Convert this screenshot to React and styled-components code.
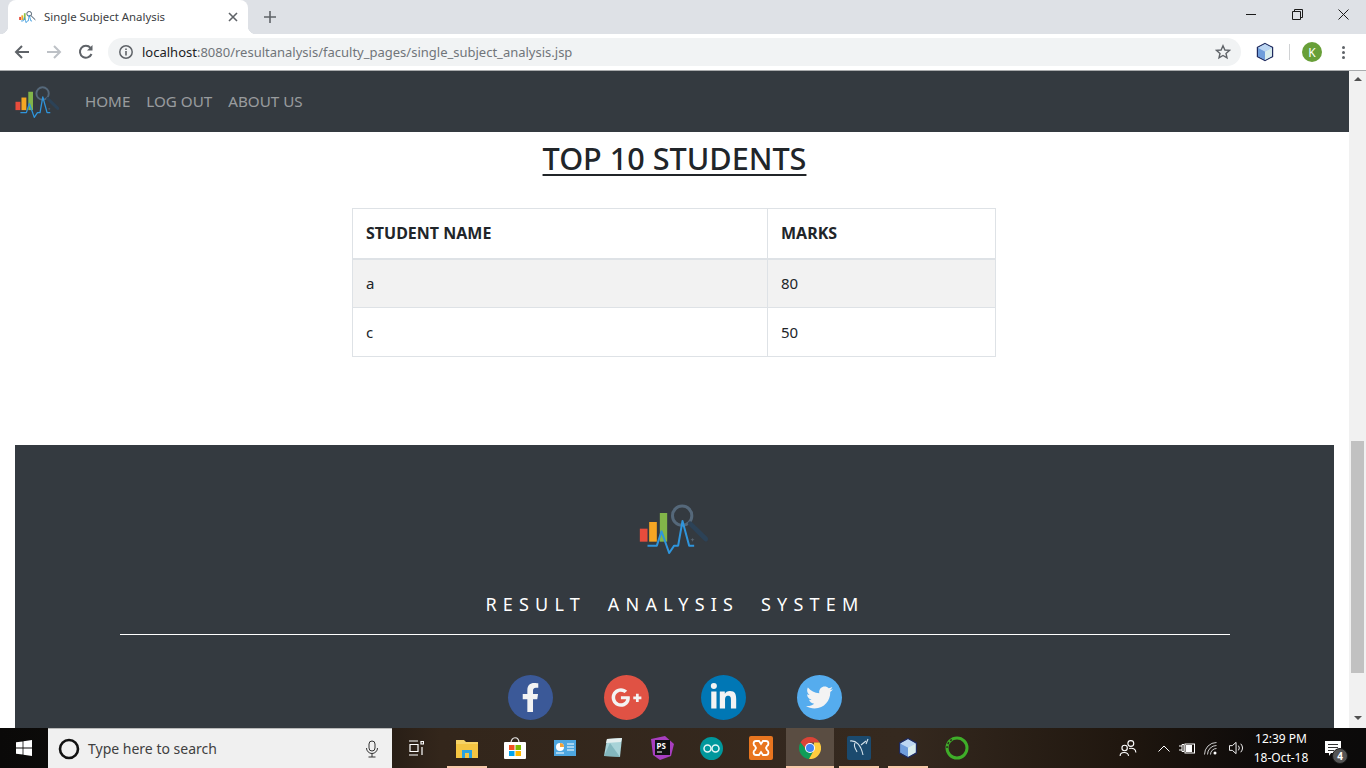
import React from "react";
import styled, { createGlobalStyle } from "styled-components";
import { FaFacebookF, FaGooglePlusG, FaLinkedinIn, FaTwitter } from "react-icons/fa";

const Global = createGlobalStyle`
  html, body { margin: 0; padding: 0; height: 100%; overflow: hidden; background: #fff; }
  * { box-sizing: border-box; }
  body { font-family: "Noto Sans", "Open Sans", sans-serif; color: #212529; }
`;

const Shell = styled.div`display: flex; flex-direction: column; height: 768px; width: 1366px; overflow: hidden;`;

/* ---------- browser chrome ---------- */
const TabStrip = styled.div`display: flex; align-items: stretch; height: 34px; background: #dee1e6; padding-left: 8px; flex: none;`;
const Tab = styled.div`
  position: relative; display: flex; align-items: center; width: 240px; background: #fff;
  border-radius: 8px 8px 0 0; padding: 0 10px 0 11px; color: #3c4043;
  &::before, &::after { content: ""; position: absolute; bottom: 0; width: 8px; height: 8px; }
  &::before { left: -8px; background: radial-gradient(circle at 0 0, #dee1e6 8px, #fff 8.5px); }
  &::after { right: -8px; background: radial-gradient(circle at 100% 0, #dee1e6 8px, #fff 8.5px); }
`;
const TabTitle = styled.span`font-size: 11.4px; margin-left: 8px; padding-bottom: 2px; flex: 1; white-space: nowrap;`;
const NewTab = styled.div`display: flex; align-items: center; margin-left: 15px; width: 16px;`;
const WindowControls = styled.div`display: flex; margin-left: auto; align-items: flex-start;`;
const WinBtn = styled.div`width: 46px; height: 28px; display: flex; align-items: center; justify-content: center;`;

const Toolbar = styled.div`
  display: flex; align-items: center; height: 37px; background: #fff; flex: none;
  border-bottom: 1px solid #a9abad; padding: 0 0 0 12px;
`;
const NavBtn = styled.div`width: 32px; height: 20px; display: flex; align-items: center; justify-content: flex-start; padding-left: 2px;`;
const Omnibox = styled.div`
  display: flex; align-items: center; width: 1133px; height: 28px; border-radius: 14px;
  background: #f1f3f4; padding: 0 10px;
`;
const Url = styled.div`font-size: 13px; margin-left: 8px; flex: 1; color: #70757a; white-space: nowrap;`;
const UrlHost = styled.span`color: #202124;`;
const ToolIcons = styled.div`display: flex; align-items: center; flex: 1; padding-left: 14px;`;
const Separator = styled.div`width: 1px; height: 16px; background: #d0d2d4; margin: 0 12px 0 14px;`;
const Avatar = styled.div`
  width: 20px; height: 20px; border-radius: 50%; background: #689f38; color: #fff; font-size: 12px;
  display: flex; align-items: center; justify-content: center;
`;
const MenuDots = styled.div`display: flex; flex-direction: column; gap: 2px; margin-left: 20px;`;
const Dot = styled.span`width: 3px; height: 3px; border-radius: 50%; background: #5f6368;`;

/* ---------- page ---------- */
const Viewport = styled.div`display: flex; flex: 1; min-height: 0;`;
const Page = styled.div`flex: 1; min-width: 0; overflow: hidden; background: #fff;`;
const Navbar = styled.nav`display: flex; align-items: center; height: 61px; background: #343a40; padding: 0 16px 0 15px;`;
const NavLinks = styled.div`display: flex; gap: 16px; margin-left: 24px; padding-bottom: 2px;`;
const NavLink = styled.a`font-size: 15.2px; color: rgba(255,255,255,.5); text-transform: uppercase;`;
const Heading = styled.h2`
  margin: 4px 0 0; text-align: center; font-size: 30.6px; line-height: 44px; font-weight: 500; text-decoration: underline;
  text-decoration-thickness: 2px; text-underline-offset: 4px; color: #212529;
`;
const Table = styled.table`
  width: 644px; margin: 28px 0 0 352px; border-collapse: collapse; font-size: 15px; color: #212529;
`;
const Th = styled.th`
  border: 1px solid #dee2e6; border-bottom-width: 2px; padding: 0 13px; height: 50px; text-align: left; font-weight: 700; font-size: 16px;
  width: ${p => p.$w};
`;
const Td = styled.td`border: 1px solid #dee2e6; padding: 0 13px; height: 49px;`;
const Row = styled.tr`background: ${p => (p.$striped ? "#f2f2f2" : "#fff")};`;
const Footer = styled.footer`
  margin: 88px 15px 0; background: #343a40; padding: 59px 104px 0 105px; display: flex; flex-direction: column; align-items: center; height: 300px;
`;
const FooterTitle = styled.div`
  margin-top: 38px; font-size: 18px; line-height: 24px; letter-spacing: 6.22px; color: #fff; white-space: pre; text-align: center;
`;
const FooterRule = styled.hr`width: 100%; margin: 18px 0 0; border: 0; border-top: 1px solid #fff;`;
const Socials = styled.div`display: flex; gap: 51.5px; margin-top: 40px;`;
const Social = styled.a`
  width: 45px; height: 45px; border-radius: 50%; background: ${p => p.$bg}; color: #f3f3f3;
  display: flex; align-items: center; justify-content: center; font-size: ${p => p.$size}px;
`;

const Scrollbar = styled.div`width: 17px; flex: none; background: #f1f1f1; display: flex; flex-direction: column; align-items: center; height: 100%;`;
const ScrollArrow = styled.div`
  width: 0; height: 0; border-left: 4px solid transparent; border-right: 4px solid transparent; flex: none;
  ${p => (p.$down ? "border-top: 4px solid #505050; margin-top: 43px;" : "border-bottom: 4px solid #505050; margin-top: 6px;")}
`;
const ScrollThumb = styled.div`width: 13px; height: 232px; background: #c1c1c1; margin-top: 360px; flex: none;`;

/* ---------- taskbar ---------- */
const Taskbar = styled.div`
  display: flex; align-items: stretch; height: 40px; flex: none; color: #fff;
  background: linear-gradient(90deg, #0a0908 0, #14100d 300px, #33261b 440px, #35291f 900px, #20170f 1120px, #0e0b0a 1260px, #0b0a0a 100%);
`;
const Start = styled.div`width: 48px; display: flex; align-items: center; justify-content: center;`;
const Search = styled.div`
  width: 344px; display: flex; align-items: center; background: #f0f0f0; padding: 0 12px 0 10px; color: #3a3a3a;
  border-top: 1px solid #b8b8b8;
`;
const SearchText = styled.span`flex: 1; margin-left: 8px; font-size: 14px; color: #404040;`;
const AppCell = styled.div`
  position: relative; width: 48px; margin-left: ${p => p.$ml || 0}px; display: flex; align-items: center; justify-content: center;
  background: ${p => (p.$active ? "#5a4d42" : "transparent")};
  &::after {
    content: ""; position: absolute; bottom: 0; height: 2px; background: #f8c9a9;
    display: ${p => (p.$running ? "block" : "none")}; left: ${p => (p.$active ? 0 : 4)}px; right: ${p => (p.$active ? 0 : 4)}px;
  }
`;
const Tray = styled.div`display: flex; align-items: center; margin-left: auto;`;
const TrayIcon = styled.div`display: flex; width: ${p => p.$w}px; margin-left: ${p => p.$ml || 0}px; justify-content: center; align-items: center;`;
const Clock = styled.div`width: 66px; margin-left: 3px; text-align: center; font-size: 12px; line-height: 19px; color: #fff; white-space: nowrap;`;
const Notify = styled.div`position: relative; width: 46px; margin-left: 6px; display: flex; justify-content: center; padding-right: 20px;`;
const Badge = styled.span`
  position: absolute; left: 12px; top: 7px; width: 16px; height: 16px; border-radius: 50%; background: #555;
  border: 1px solid #1a1a1a; font-size: 10px; font-weight: 700; color: #fff; display: flex; align-items: center; justify-content: center; line-height: 1;
`;

/* ---------- drawings ---------- */
const Logo = ({ w, h }) => (
  <svg width={w} height={h} viewBox="55 25 215 150" style={{ flex: "none" }}>
    <rect x="57" y="99" width="23" height="39" fill="#e74c3c" />
    <rect x="85" y="79" width="23" height="59" fill="#f5a623" />
    <rect x="117" y="52" width="22" height="86" fill="#8bc34a" opacity=".9" />
    <circle cx="184" cy="60" r="29" fill="none" stroke="#55687a" strokeWidth="9" />
    <path d="M208 84 L255 130" stroke="#2c4257" strokeWidth="14" strokeLinecap="round" />
    <path d="M80 150 H108 L122 107 L145 172 L160 150 H172 L185 76 L205 150 H220" fill="none" stroke="#2f95dc" strokeWidth="6" strokeLinejoin="round" />
    <path d="M210 132 H220 M215 128 V137" stroke="#5a6672" strokeWidth="2.5" />
  </svg>
);

const Cube = ({ s = 20 }) => (
  <svg width={s} height={s} viewBox="0 0 20 20">
    <path d="M10 1.5 L17.5 5.5 V14.5 L10 18.5 L2.5 14.5 V5.5 Z" fill="#a7c6ea" stroke="#1e2a5e" strokeWidth="1.4" />
    <path d="M3 5.8 L10 9.5 V18 L3 14.2 Z" fill="#6f9ddb" />
    <path d="M10 9.5 L17 5.8 V14.2 L10 18 Z" fill="#d9ecec" />
    <path d="M3 5.8 L10 2 L17 5.8 L10 9.5 Z" fill="#bcd6f2" />
  </svg>
);

const I = { stroke: "currentColor", fill: "none" };

export default function App() {
  return (
    <Shell>
      <Global />
      <TabStrip>
        <Tab>
          <svg width="17" height="12" viewBox="55 25 215 150"><rect x="57" y="99" width="23" height="39" fill="#e74c3c" /><rect x="85" y="79" width="23" height="59" fill="#f5a623" /><rect x="117" y="52" width="22" height="86" fill="#8bc34a" /><circle cx="184" cy="60" r="30" fill="none" stroke="#4a5b6c" strokeWidth="12" /><path d="M208 84 L262 136" stroke="#2c4257" strokeWidth="12" /><path d="M80 150 H108 L122 107 L145 172 L160 150 H172 L185 76 L205 150 H220" fill="none" stroke="#2f95dc" strokeWidth="10" /></svg>
          <TabTitle>Single Subject Analysis</TabTitle>
          <svg width="10" height="10" viewBox="0 0 10 10"><path d="M1 1 L9 9 M9 1 L1 9" stroke="#5f6368" strokeWidth="1.6" /></svg>
        </Tab>
        <NewTab>
          <svg width="14" height="14" viewBox="0 0 14 14"><path d="M7 1 V13 M1 7 H13" stroke="#5f6368" strokeWidth="1.6" /></svg>
        </NewTab>
        <WindowControls>
          <WinBtn><svg width="10" height="10" viewBox="0 0 10 10"><path d="M0 5.5 H10" stroke="#1a1a1a" /></svg></WinBtn>
          <WinBtn><svg width="11" height="11" viewBox="0 0 11 11"><path d="M.5 2.5 H8.5 V10.5 H.5 Z M2.5 2.5 V.5 H10.5 V8.5 H8.5" fill="none" stroke="#1a1a1a" /></svg></WinBtn>
          <WinBtn><svg width="11" height="11" viewBox="0 0 11 11"><path d="M.5 .5 L10.5 10.5 M10.5 .5 L.5 10.5" stroke="#1a1a1a" /></svg></WinBtn>
        </WindowControls>
      </TabStrip>
      <Toolbar>
        <NavBtn><svg width="16" height="16" viewBox="0 0 16 16"><path d="M15 8 H2 M8 2 L2 8 L8 14" {...I} stroke="#5f6368" strokeWidth="2" /></svg></NavBtn>
        <NavBtn><svg width="16" height="16" viewBox="0 0 16 16"><path d="M1 8 H14 M8 2 L14 8 L8 14" {...I} stroke="#bdc1c6" strokeWidth="2" /></svg></NavBtn>
        <NavBtn><svg width="16" height="16" viewBox="0 0 16 16"><path d="M13.5 10 A6 6 0 1 1 12.5 3.8" {...I} stroke="#5f6368" strokeWidth="2" /><path d="M14.5 1 V6.5 H9 Z" fill="#5f6368" /></svg></NavBtn>
        <Omnibox>
          <svg width="16" height="16" viewBox="0 0 16 16"><circle cx="8" cy="8" r="6.2" {...I} stroke="#5f6368" strokeWidth="1.5" /><path d="M8 7 V11.5 M8 4.5 V6" stroke="#5f6368" strokeWidth="1.6" /></svg>
          <Url><UrlHost>localhost</UrlHost>:8080/resultanalysis/faculty_pages/single_subject_analysis.jsp</Url>
          <svg width="16" height="16" viewBox="0 0 16 16"><path d="M8 1.8 L9.9 6 L14.4 6.4 L11 9.4 L12 13.9 L8 11.5 L4 13.9 L5 9.4 L1.6 6.4 L6.1 6 Z" {...I} stroke="#5f6368" strokeWidth="1.4" /></svg>
        </Omnibox>
        <ToolIcons>
          <Cube s={20} />
          <Separator />
          <Avatar>K</Avatar>
          <MenuDots><Dot /><Dot /><Dot /></MenuDots>
        </ToolIcons>
      </Toolbar>
      <Viewport>
        <Page>
          <Navbar>
            <Logo w={46} h={32} />
            <NavLinks>
              <NavLink>Home</NavLink>
              <NavLink>Log out</NavLink>
              <NavLink>About us</NavLink>
            </NavLinks>
          </Navbar>
          <Heading>TOP 10 STUDENTS</Heading>
          <Table>
            <thead>
              <tr><Th $w="415px">STUDENT NAME</Th><Th>MARKS</Th></tr>
            </thead>
            <tbody>
              <Row $striped><Td>a</Td><Td>80</Td></Row>
              <Row><Td>c</Td><Td>50</Td></Row>
            </tbody>
          </Table>
          <Footer>
            <Logo w={72} h={50} />
            <FooterTitle>RESULT  ANALYSIS  SYSTEM</FooterTitle>
            <FooterRule />
            <Socials>
              <Social $bg="#3b5998" $size={29}><FaFacebookF /></Social>
              <Social $bg="#e05244" $size={31}><FaGooglePlusG /></Social>
              <Social $bg="#0077b5" $size={29}><FaLinkedinIn /></Social>
              <Social $bg="#55acee" $size={27}><FaTwitter /></Social>
            </Socials>
          </Footer>
        </Page>
        <Scrollbar>
          <ScrollArrow />
          <ScrollThumb />
          <ScrollArrow $down />
        </Scrollbar>
      </Viewport>
      <Taskbar>
        <Start>
          <svg width="16" height="16" viewBox="0 0 16 16" fill="#fff"><path d="M0 2.3 L6.6 1.4 V7.6 H0 Z M7.4 1.3 L16 0 V7.6 H7.4 Z M0 8.4 H6.6 V14.6 L0 13.7 Z M7.4 8.4 H16 V16 L7.4 14.7 Z" /></svg>
        </Start>
        <Search>
          <svg width="22" height="22" viewBox="0 0 22 22"><circle cx="11" cy="11" r="9" {...I} stroke="#111" strokeWidth="2.6" /></svg>
          <SearchText>Type here to search</SearchText>
          <svg width="16" height="18" viewBox="0 0 16 18"><rect x="5" y="1" width="6" height="10" rx="3" {...I} stroke="#333" /><path d="M2.5 8 A5.5 5.5 0 0 0 13.5 8 M8 13.5 V17 M4.5 17 H11.5" {...I} stroke="#333" /></svg>
        </Search>
        <AppCell>
          <svg width="16" height="16" viewBox="0 0 16 16"><path d="M1 1 H10 M1 15 H10 M2 4.5 H10 V11.5 H2 Z M13 1.5 H15.5 V4 H13 Z M14 7 V15" {...I} stroke="#fff" strokeWidth="1.2" /></svg>
        </AppCell>
        <AppCell $ml={3} $running>
          <svg width="22" height="19" viewBox="0 0 22 19"><path d="M0 1 H8 L10 3 H22 V19 H0 Z" fill="#f6d365" /><path d="M0 5 H22 V19 H0 Z" fill="#f4c542" /><path d="M6 19 V11 H16 V19 H13 V14 H9 V19 Z" fill="#2aa3e0" /></svg>
        </AppCell>
        <AppCell>
          <svg width="24" height="24" viewBox="0 0 24 24"><path d="M8 7 C8 0 16 0 16 7" {...I} stroke="#eee" strokeWidth="1.2" /><rect x="1" y="6" width="22" height="17" rx="1" fill="#fff" /><rect x="6" y="9" width="5.5" height="5" fill="#f25022" /><rect x="12.5" y="9" width="5.5" height="5" fill="#7fba00" /><rect x="6" y="15" width="5.5" height="5" fill="#00a4ef" /><rect x="12.5" y="15" width="5.5" height="5" fill="#ffb900" /></svg>
        </AppCell>
        <AppCell $ml={2}>
          <svg width="22" height="16" viewBox="0 0 22 16"><rect width="22" height="16" fill="#4da6e0" /><circle cx="6" cy="7" r="4" fill="#fff" /><path d="M6 7 V3 A4 4 0 0 1 10 7 Z" fill="#f2a33a" /><path d="M13 4 H20 M13 7 H20 M13 10 H20 M2 13 H10" stroke="#fff" /></svg>
        </AppCell>
        <AppCell>
          <svg width="22" height="22" viewBox="0 0 22 22"><path d="M5 2 L20 1 L18 20 L2 19 Z" fill="#a8d3d8" /><path d="M5 2 L20 1 L19 5 L4 6 Z" fill="#e4eeee" /><path d="M2 19 L8 6 L18 20 Z" fill="#6aa5ae" opacity=".6" /></svg>
        </AppCell>
        <AppCell $ml={1}>
          <svg width="24" height="24" viewBox="0 0 24 24"><path d="M1 3 L15 0 L24 8 L21 20 L10 24 L3 19 Z" fill="#a83ec0" /><rect x="5" y="4" width="15" height="15" fill="#111" /><text x="6.5" y="12.5" fontSize="8" fontWeight="700" fill="#fff" fontFamily="Noto Sans, sans-serif">PS</text><path d="M7 16 H12" stroke="#fff" /></svg>
        </AppCell>
        <AppCell $ml={1}>
          <svg width="23" height="23" viewBox="0 0 23 23"><circle cx="11.5" cy="11.5" r="11.5" fill="#00979c" /><circle cx="7.5" cy="11.5" r="3.5" {...I} stroke="#e5f5f5" strokeWidth="1.5" /><circle cx="15.5" cy="11.5" r="3.5" {...I} stroke="#e5f5f5" strokeWidth="1.5" /></svg>
        </AppCell>
        <AppCell $ml={2}>
          <svg width="24" height="24" viewBox="0 0 24 24"><rect width="24" height="24" rx="2" fill="#e8751f" /><path d="M7 5 H10 L12 8 L14 5 H17 C20 5 20 9 18 10 L17 12 L18 14 C20 15 20 19 17 19 H14 L12 16 L10 19 H7 C4 19 4 15 6 14 L7 12 L6 10 C4 9 4 5 7 5 Z" {...I} stroke="#fff" strokeWidth="1.8" /></svg>
        </AppCell>
        <AppCell $ml={1} $active $running>
          <svg width="22" height="22" viewBox="0 0 22 22"><path d="M11 0 A11 11 0 0 1 20.5 5.5 H11 Z" fill="#db4437" /><path d="M1.5 5.5 A11 11 0 0 1 11 0 V7 L7 13 Z" fill="#db4437" /><path d="M1.5 5.5 A11 11 0 0 0 10 22 L14 15 H9 Z" fill="#0f9d58" /><path d="M20.5 5.5 A11 11 0 0 1 10 22 L15 13 V5.5 Z" fill="#ffcd40" /><circle cx="11" cy="11" r="5" fill="#fff" /><circle cx="11" cy="11" r="4" fill="#4285f4" /></svg>
        </AppCell>
        <AppCell $ml={1} $running>
          <svg width="24" height="24" viewBox="0 0 24 24"><rect width="24" height="24" rx="2" fill="#1b4a6e" /><path d="M3 5 C9 4 14 9 16 19 M8 7 C6 11 9 13 10 16 M14 9 L19 5 M19 8 L21 3" {...I} stroke="#d5e2ea" strokeWidth="1.1" /></svg>
        </AppCell>
        <AppCell $ml={1} $running>
          <Cube s={22} />
        </AppCell>
        <AppCell $ml={1}>
          <svg width="24" height="24" viewBox="0 0 24 24"><circle cx="12" cy="12" r="10" {...I} stroke="#3fae29" strokeWidth="3" /><path d="M2 12 A10 10 0 0 1 7 3.5" {...I} stroke="#2a2a1c" strokeWidth="1.5" strokeDasharray="2 2" /></svg>
        </AppCell>
        <Tray>
          <TrayIcon $w={20}><svg width="18" height="18" viewBox="0 0 16 16"><circle cx="10.5" cy="4" r="2.6" {...I} stroke="#fff" /><circle cx="5" cy="8" r="2.4" {...I} stroke="#fff" /><path d="M1 15 C1 11 8 11 8.5 15 M9 8.5 C12 7.5 15 9 15 12" {...I} stroke="#fff" /></svg></TrayIcon>
          <TrayIcon $w={16} $ml={18}><svg width="12" height="7" viewBox="0 0 12 7"><path d="M.5 6.5 L6 1 L11.5 6.5" {...I} stroke="#fff" /></svg></TrayIcon>
          <TrayIcon $w={16} $ml={7}><svg width="16" height="11" viewBox="0 0 16 11"><path d="M0 3 H3 M0 7 H3 M3 1.5 H5 V8.5 H3 Z" {...I} stroke="#fff" /><rect x="6" y="1" width="9.5" height="9" {...I} stroke="#fff" /><rect x="7" y="2" width="6" height="7" fill="#fff" /></svg></TrayIcon>
          <TrayIcon $w={16} $ml={8}><svg width="15" height="13" viewBox="0 0 15 13"><path d="M.5 12.5 A12 12 0 0 1 12.5 .5 M3.5 12.5 A9 9 0 0 1 12.5 3.5 M6.5 12.5 A6 6 0 0 1 12.5 6.5" {...I} stroke="#ccc" /><circle cx="11" cy="11" r="1.5" fill="#fff" /></svg></TrayIcon>
          <TrayIcon $w={16} $ml={10}><svg width="17" height="14" viewBox="0 0 17 14"><path d="M.5 4.5 H3.5 L7.5 1 V13 L3.5 9.5 H.5 Z" {...I} stroke="#fff" /><path d="M10 4.5 A4 4 0 0 1 10 9.5 M12.5 2.5 A7 7 0 0 1 12.5 11.5" {...I} stroke="#fff" /></svg></TrayIcon>
          <Clock>12:39 PM<br />18-Oct-18</Clock>
          <Notify>
            <svg width="16" height="15" viewBox="0 0 16 15"><path d="M0 0 H16 V12 H6 L4 15 V12 H0 Z" fill="#fff" /><path d="M3 3.5 H13 M3 6.5 H13 M3 9.5 H9" stroke="#333" /></svg>
            <Badge>4</Badge>
          </Notify>
        </Tray>
      </Taskbar>
    </Shell>
  );
}
